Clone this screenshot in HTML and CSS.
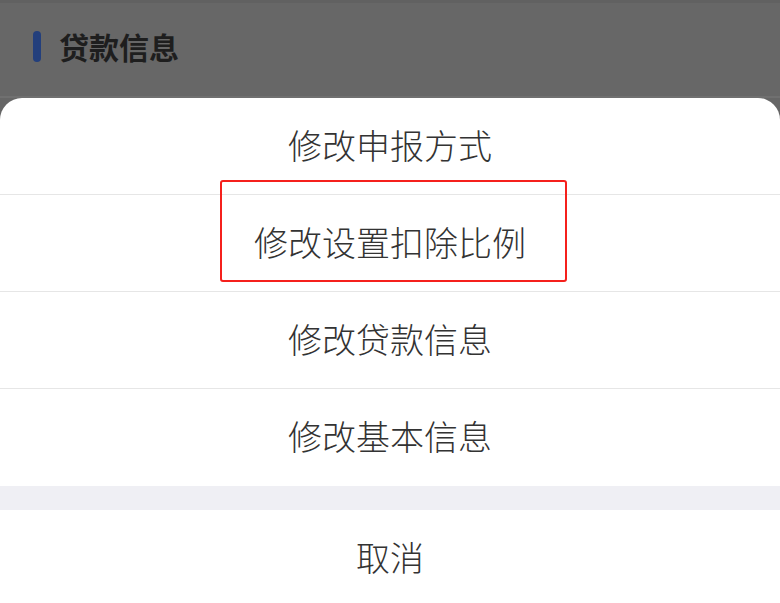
FILE: index.html
```html
<!DOCTYPE html>
<html lang="zh">
<head>
<meta charset="utf-8">
<title>操作菜单</title>
<link rel="stylesheet" href="styles.css">
</head>
<body>
<div class="screen">
  <div class="backdrop">
    <div class="section-title">
      <span class="title-bar"></span>
      <span class="title-text">贷款信息</span>
    </div>
  </div>
  <div class="sheet">
    <div class="action">修改申报方式</div>
    <div class="action">修改设置扣除比例</div>
    <div class="action">修改贷款信息</div>
    <div class="action">修改基本信息</div>
    <div class="gap"></div>
    <div class="action cancel">取消</div>
  </div>
  <div class="highlight"></div>
</div>
</body>
</html>
```

FILE: styles.css
```css
* { box-sizing: border-box; }
html, body {
  margin: 0;
  padding: 0;
  width: 780px;
  height: 603px;
  overflow: hidden;
  background: #666666;
  font-family: "Noto Sans CJK SC", "Noto Sans", sans-serif;
}
.screen {
  position: relative;
  width: 780px;
  height: 603px;
  background: #666666;
  display: flex;
  flex-direction: column;
}
.backdrop {
  height: 98px;
  flex: none;
  background: #676767;
  border-top: 3px solid #616161;
  border-bottom: 2px solid #707070;
  display: flex;
  align-items: center;
  padding: 0 0 7px 33px;
}
.section-title {
  display: flex;
  align-items: center;
  gap: 18px;
}
.title-bar {
  width: 8px;
  height: 31px;
  border-radius: 4px;
  background: #233f7c;
}
.title-text {
  font-size: 30px;
  font-weight: 700;
  color: #1e1e1e;
  line-height: 1;
}
.sheet {
  flex: none;
  background: #ffffff;
  border-radius: 22px 22px 0 0;
  display: flex;
  flex-direction: column;
  overflow: hidden;
}
.action {
  height: 97px;
  flex: none;
  display: flex;
  align-items: center;
  justify-content: center;
  font-size: 34px;
  font-weight: 300;
  color: #333333;
  border-bottom: 1px solid #e6e6e6;
  padding-bottom: 4px;
}
.action:nth-child(4) { border-bottom: none; }
.gap {
  height: 24px;
  flex: none;
  background: #efeff4;
}
.cancel {
  height: 96px;
  border-bottom: none;
  padding-bottom: 4px;
}
.highlight {
  position: absolute;
  left: 220px;
  top: 180px;
  width: 347px;
  height: 102px;
  border: 2px solid #f5201c;
  border-radius: 3px;
}
```
